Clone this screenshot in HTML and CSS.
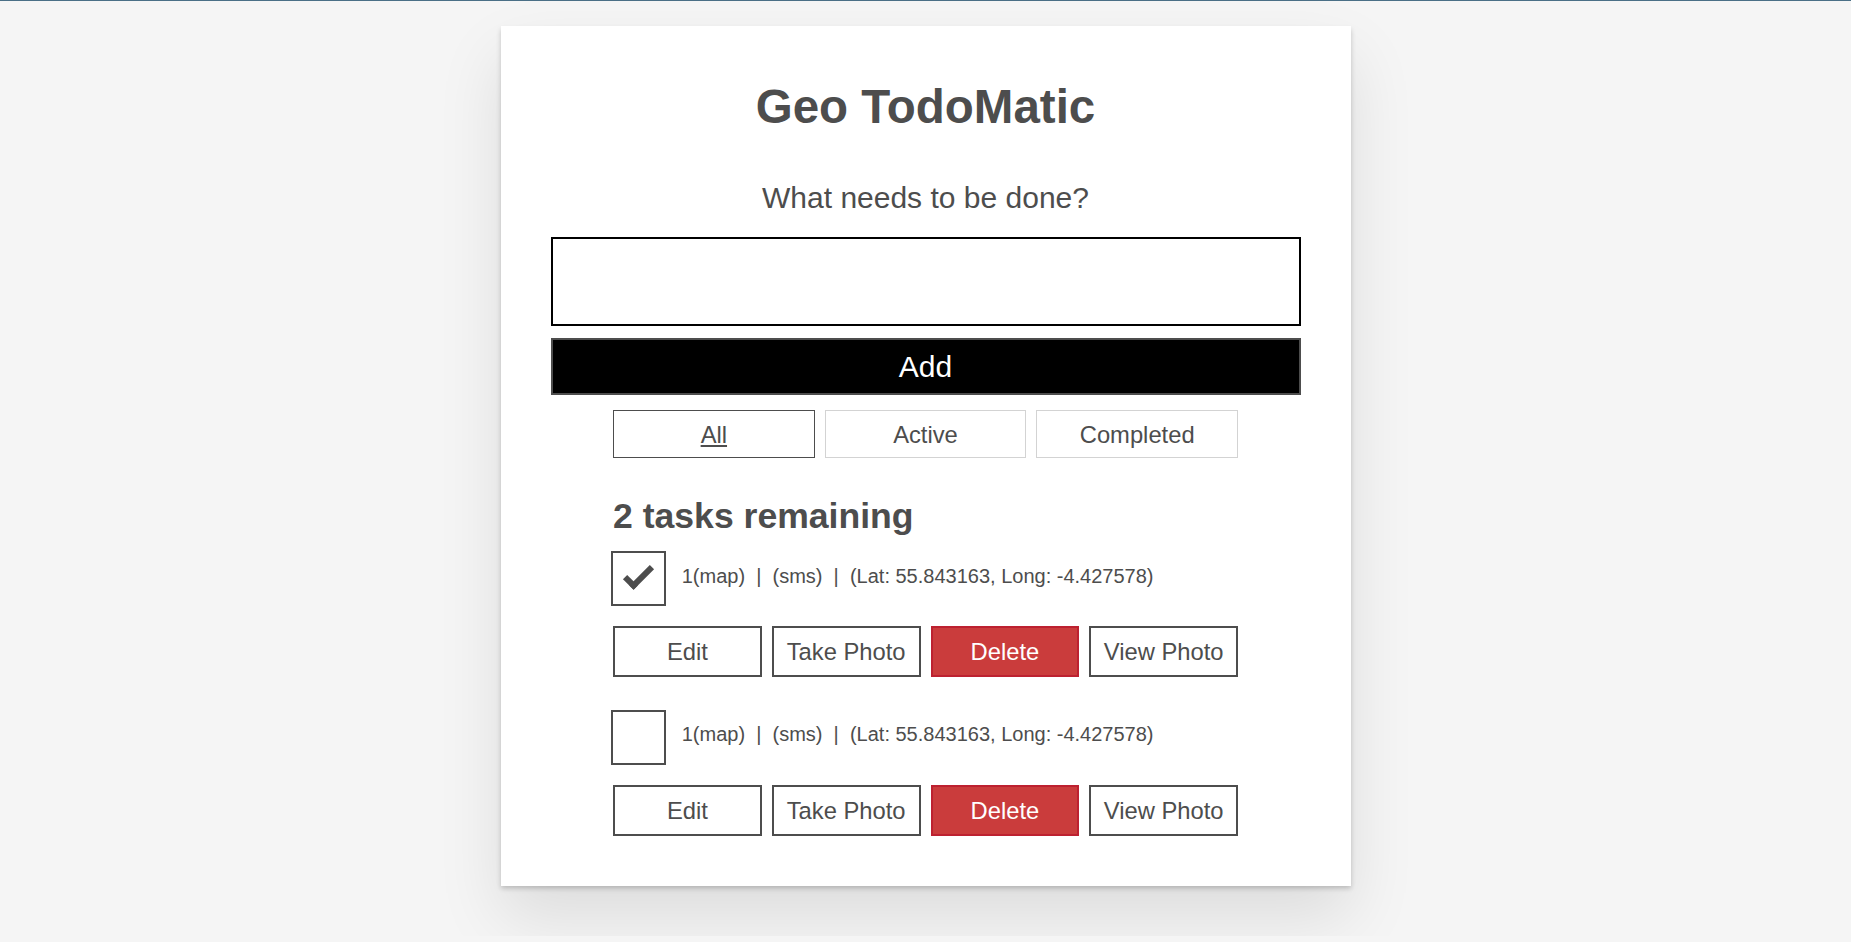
FILE: index.html
```html
<!DOCTYPE html>
<html lang="en">
<head>
<meta charset="utf-8">
<title>Geo TodoMatic</title>
<link rel="stylesheet" href="styles.css">
</head>
<body>
<div class="topbar"></div>
<main class="todoapp">
  <h1 class="title">Geo TodoMatic</h1>
  <form class="new-todo">
    <h2 class="label-wrapper"><label class="label__lg" for="new-todo-input">What needs to be done?</label></h2>
    <input class="input__lg" id="new-todo-input" type="text" autocomplete="off">
    <button type="button" class="btn btn__primary btn__lg">Add</button>
  </form>
  <div class="filters btn-group">
    <button type="button" class="btn toggle-btn pressed">All</button>
    <button type="button" class="btn toggle-btn">Active</button>
    <button type="button" class="btn toggle-btn">Completed</button>
  </div>
  <h2 class="list-heading">2 tasks remaining</h2>
  <ul class="todo-list">
    <li class="todo">
      <div class="c-cb">
        <span class="cb-box checked"></span>
        <span class="cb-label">1(map)&nbsp; |&nbsp; (sms)&nbsp; |&nbsp; (Lat: 55.843163, Long: -4.427578)</span>
      </div>
      <div class="btn-group">
        <button type="button" class="btn">Edit</button>
        <button type="button" class="btn">Take Photo</button>
        <button type="button" class="btn btn__danger">Delete</button>
        <button type="button" class="btn">View Photo</button>
      </div>
    </li>
    <li class="todo">
      <div class="c-cb">
        <span class="cb-box"></span>
        <span class="cb-label">1(map)&nbsp; |&nbsp; (sms)&nbsp; |&nbsp; (Lat: 55.843163, Long: -4.427578)</span>
      </div>
      <div class="btn-group">
        <button type="button" class="btn">Edit</button>
        <button type="button" class="btn">Take Photo</button>
        <button type="button" class="btn btn__danger">Delete</button>
        <button type="button" class="btn">View Photo</button>
      </div>
    </li>
  </ul>
</main>
</body>
</html>
```
FILE: styles.css
```css
*, *::before, *::after { box-sizing: border-box; }

html { background: #f5f5f5; }

body {
  margin: 0;
  background: #f5f5f5;
  color: #4d4d4d;
  font-family: Arial, "Liberation Sans", sans-serif;
  font-size: 23.75px;
  line-height: 1.31579;
}

.topbar {
  height: 1px;
  background: #4a6f86;
}

.todoapp {
  width: 850px;
  margin: 25px auto 50px;
  background: #fff;
  padding: 50px;
  box-shadow: 0 2.5px 5px 0 rgba(0, 0, 0, 0.2), 0 31px 62px 0 rgba(0, 0, 0, 0.1);
  display: flex;
  flex-direction: column;
}

.title {
  margin: 0;
  font-size: 47.5px;
  line-height: 62.5px;
  font-weight: bold;
  text-align: center;
}

.new-todo {
  margin: 0;
  display: flex;
  flex-direction: column;
}

.label-wrapper {
  margin: 34px 0 13.5px;
  text-align: center;
  font-size: 30px;
  font-weight: normal;
  line-height: 30.5px;
}

.label__lg {
  display: block;
  padding: 10px;
  font-size: 30px;
  line-height: 30.5px;
  font-weight: 300;
}

.input__lg {
  display: block;
  width: 100%;
  margin: 0 0 12.5px;
  padding: 25px;
  border: 2px solid #000;
  border-radius: 0;
  font-family: inherit;
  font-size: 30px;
  line-height: 34.5px;
  height: 89px;
  background: #fff;
  outline: none;
}

.btn {
  margin: 0;
  padding: 11px 12.5px 10px;
  border: 2px solid #4d4d4d;
  background: transparent;
  color: inherit;
  font-family: inherit;
  font-size: 23.75px;
  line-height: 26px;
  cursor: pointer;
  text-transform: capitalize;
  border-radius: 0;
}

.btn__lg {
  width: 100%;
  font-size: 30px;
  line-height: 34px;
  padding: 10px 12.5px 9px;
}

.btn__primary {
  color: #fff;
  background: #000;
}

.btn__danger {
  color: #fff;
  background: #ca3c3c;
  border-color: #bd2130;
}

.btn-group {
  display: flex;
  gap: 10px;
}

.btn-group > .btn {
  flex: 1 1 0;
  min-width: 0;
}

.filters {
  width: 625px;
  margin: 14.5px auto 0;
}

.toggle-btn {
  border-width: 1px;
  border-color: #d3d3d3;
  padding: 10px 12.5px 9px;
  line-height: 27.5px;
}

.toggle-btn.pressed {
  border-color: #4d4d4d;
  text-decoration: underline;
}

.list-heading {
  width: 625px;
  margin: 35px auto 0;
  font-size: 35.6px;
  line-height: 46.8px;
  font-weight: bold;
}

.todo-list {
  width: 625px;
  margin: 14px auto 0;
  padding: 0;
  list-style: none;
  display: flex;
  flex-direction: column;
  gap: 35px;
}

.todo {
  display: flex;
  flex-direction: column;
  gap: 17.5px;
}

.c-cb {
  display: flex;
  align-items: flex-start;
  min-height: 55px;
  font-size: 20px;
  line-height: 25px;
}

.cb-box {
  position: relative;
  flex: 0 0 55px;
  width: 55px;
  height: 55px;
  margin: -2.5px 0 0 -2.5px;
  border: 2px solid #4d4d4d;
}

.cb-box.checked::after {
  content: "";
  position: absolute;
  top: 14px;
  left: 11.5px;
  box-sizing: content-box;
  width: 22.5px;
  height: 8.75px;
  border-style: solid;
  border-color: #4d4d4d;
  border-width: 0 0 6px 6px;
  transform: rotate(-45deg);
}

.cb-label {
  padding: 10px 18.75px 6.25px 16.25px;
  white-space: nowrap;
}
```
